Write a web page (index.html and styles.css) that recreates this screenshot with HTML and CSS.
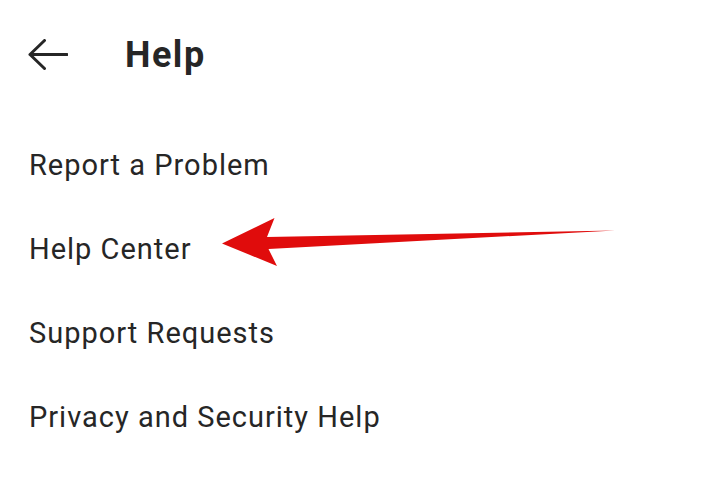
FILE: index.html
```html
<!DOCTYPE html>
<html lang="en">
<head>
    <meta charset="UTF-8">
    <title>Help</title>
    <link rel="stylesheet" href="styles.css">
</head>
<body>
    <div class="screen">
        <!-- Kopfzeile -->
        <div class="header">
            <svg class="back" width="40" height="32" viewBox="0 0 40 32">
                <path d="M2 15.5 H39 M16.5 1.5 L2 15.5 L16.5 29.5" fill="none" stroke="#262626" stroke-width="3" stroke-linecap="round" stroke-linejoin="round"/>
            </svg>
            <h1>Help</h1>
        </div>

        <!-- Menüpunkte -->
        <div class="menu">
            <div class="item">Report a Problem</div>
            <div class="item">Help Center</div>
            <div class="item">Support Requests</div>
            <div class="item">Privacy and Security Help</div>
        </div>

        <!-- Markierungspfeil -->
        <svg class="pointer" width="720" height="492" viewBox="0 0 720 492">
            <polygon points="222,243.5 274.5,218 267,237 615,230.5 268.5,249 277,266" fill="#e00c0c"/>
        </svg>
    </div>
</body>
</html>
```

FILE: styles.css
```css
:root {
    --text: #262626;
}

body {
    margin: 0;
    background: #ffffff;
    font-family: 'Roboto', sans-serif;
    color: var(--text);
}

.screen {
    position: relative;
    width: 720px;
    height: 492px;
    overflow: hidden;
}

.header {
    display: flex;
    align-items: center;
    height: 110px;
    margin-bottom: 13px;
    padding-left: 28px;
}

.back {
    margin-right: 57px;
}

h1 {
    margin: 0;
    font-size: 36px;
    font-weight: 700;
    letter-spacing: 1.5px;
}

.menu {
    display: flex;
    flex-direction: column;
}

.item {
    height: 84px;
    line-height: 84px;
    padding-left: 29px;
    font-size: 29px;
    letter-spacing: 1px;
}

.pointer {
    position: absolute;
    left: 0;
    top: 0;
}
```
